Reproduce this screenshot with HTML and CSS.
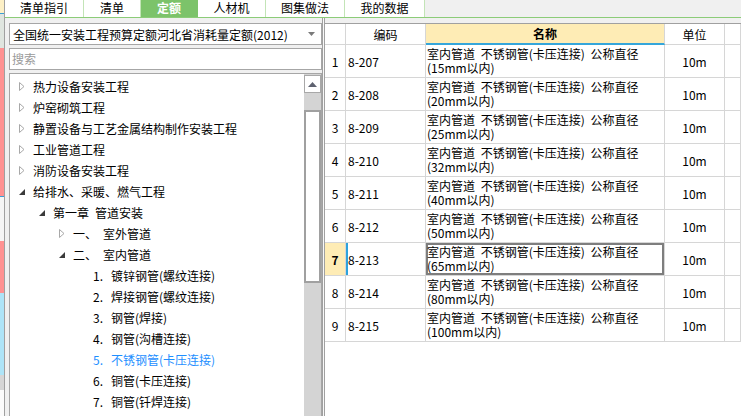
FILE: index.html
```html
<!DOCTYPE html>
<html lang="zh">
<head>
<meta charset="utf-8">
<title>定额</title>
<link rel="stylesheet" href="styles.css">
</head>
<body>
<div class="app">
  <div class="strip">
    <div class="seg s1"></div>
    <div class="seg s2"></div>
    <div class="seg s3"></div>
    <div class="seg s4"></div>
    <div class="seg s5"></div>
    <div class="seg s6"></div>
    <div class="seg s7"></div>
    <div class="seg s8"></div>
  </div>
  <div class="main">
    <div class="tabs">
      <div class="tab t1">清单指引</div>
      <div class="tab t2">清单</div>
      <div class="tab t3 active">定额</div>
      <div class="tab t4">人材机</div>
      <div class="tab t5">图集做法</div>
      <div class="tab t6">我的数据</div>
    </div>
    <div class="content">
      <div class="left">
        <div class="dropdown">
          <span>全国统一安装工程预算定额河北省消耗量定额(2012)</span>
          <svg class="caret" width="7" height="4" viewBox="0 0 7 4"><polygon points="0,0 7,0 3.5,4" fill="#7a7a7a"/></svg>
        </div>
        <div class="search">搜索</div>
        <div class="tree">
          <div class="tree-list">
            <div class="node l0"><span class="tog"><svg width="6" height="9" viewBox="0 0 6 9"><polygon points="0.5,0.5 5,4.5 0.5,8.5" fill="#fff" stroke="#a8a8a8"/></svg></span><span>热力设备安装工程</span></div>
            <div class="node l0"><span class="tog"><svg width="6" height="9" viewBox="0 0 6 9"><polygon points="0.5,0.5 5,4.5 0.5,8.5" fill="#fff" stroke="#a8a8a8"/></svg></span><span>炉窑砌筑工程</span></div>
            <div class="node l0"><span class="tog"><svg width="6" height="9" viewBox="0 0 6 9"><polygon points="0.5,0.5 5,4.5 0.5,8.5" fill="#fff" stroke="#a8a8a8"/></svg></span><span>静置设备与工艺金属结构制作安装工程</span></div>
            <div class="node l0"><span class="tog"><svg width="6" height="9" viewBox="0 0 6 9"><polygon points="0.5,0.5 5,4.5 0.5,8.5" fill="#fff" stroke="#a8a8a8"/></svg></span><span>工业管道工程</span></div>
            <div class="node l0"><span class="tog"><svg width="6" height="9" viewBox="0 0 6 9"><polygon points="0.5,0.5 5,4.5 0.5,8.5" fill="#fff" stroke="#a8a8a8"/></svg></span><span>消防设备安装工程</span></div>
            <div class="node l0"><span class="tog"><svg width="6" height="6" viewBox="0 0 6 6"><polygon points="6,0 6,6 0,6" fill="#3a3a3a"/></svg></span><span>给排水、采暖、燃气工程</span></div>
            <div class="node l1"><span class="tog"><svg width="6" height="6" viewBox="0 0 6 6"><polygon points="6,0 6,6 0,6" fill="#3a3a3a"/></svg></span><span class="chap">第一章</span><span>管道安装</span></div>
            <div class="node l2"><span class="tog"><svg width="6" height="9" viewBox="0 0 6 9"><polygon points="0.5,0.5 5,4.5 0.5,8.5" fill="#fff" stroke="#a8a8a8"/></svg></span><span class="sec">一、</span><span>室外管道</span></div>
            <div class="node l2"><span class="tog"><svg width="6" height="6" viewBox="0 0 6 6"><polygon points="6,0 6,6 0,6" fill="#3a3a3a"/></svg></span><span class="sec">二、</span><span>室内管道</span></div>
            <div class="node l3"><span class="tog"></span><span class="num">1.</span><span>镀锌钢管(螺纹连接)</span></div>
            <div class="node l3"><span class="tog"></span><span class="num">2.</span><span>焊接钢管(螺纹连接)</span></div>
            <div class="node l3"><span class="tog"></span><span class="num">3.</span><span>钢管(焊接)</span></div>
            <div class="node l3"><span class="tog"></span><span class="num">4.</span><span>钢管(沟槽连接)</span></div>
            <div class="node l3 sel"><span class="tog"></span><span class="num">5.</span><span>不锈钢管(卡压连接)</span></div>
            <div class="node l3"><span class="tog"></span><span class="num">6.</span><span>铜管(卡压连接)</span></div>
            <div class="node l3"><span class="tog"></span><span class="num">7.</span><span>铜管(钎焊连接)</span></div>
            <div class="node l3"><span class="tog"></span><span class="num">8.</span><span>承插铸铁排水管(石棉水泥接口)</span></div>
          </div>
          <div class="scrollbar">
            <div class="sb-btn"><svg width="9" height="5" viewBox="0 0 9 5"><polygon points="0,5 9,5 4.5,0" fill="#5e6270"/></svg></div>
            <div class="sb-gap"></div>
            <div class="sb-thumb"></div>
          </div>
        </div>
      </div>
      <div class="divider"></div>
      <div class="right">
        <div class="grid">
          <div class="hc"></div>
          <div class="hc">编码</div>
          <div class="hc hname">名称</div>
          <div class="hc">单位</div>
          <div class="hc"></div>

          <div class="c rn">1</div><div class="c code">8-207</div><div class="c name"><span class="ln">室内管道 不锈钢管(卡压连接) 公称直径</span><span class="ln">(15mm以内)</span></div><div class="c unit">10m</div><div class="c"></div>
          <div class="c rn">2</div><div class="c code">8-208</div><div class="c name"><span class="ln">室内管道 不锈钢管(卡压连接) 公称直径</span><span class="ln">(20mm以内)</span></div><div class="c unit">10m</div><div class="c"></div>
          <div class="c rn">3</div><div class="c code">8-209</div><div class="c name"><span class="ln">室内管道 不锈钢管(卡压连接) 公称直径</span><span class="ln">(25mm以内)</span></div><div class="c unit">10m</div><div class="c"></div>
          <div class="c rn">4</div><div class="c code">8-210</div><div class="c name"><span class="ln">室内管道 不锈钢管(卡压连接) 公称直径</span><span class="ln">(32mm以内)</span></div><div class="c unit">10m</div><div class="c"></div>
          <div class="c rn">5</div><div class="c code">8-211</div><div class="c name"><span class="ln">室内管道 不锈钢管(卡压连接) 公称直径</span><span class="ln">(40mm以内)</span></div><div class="c unit">10m</div><div class="c"></div>
          <div class="c rn">6</div><div class="c code">8-212</div><div class="c name"><span class="ln">室内管道 不锈钢管(卡压连接) 公称直径</span><span class="ln">(50mm以内)</span></div><div class="c unit">10m</div><div class="c"></div>
          <div class="c rn cur">7</div><div class="c code curcode">8-213</div><div class="c name focus"><span class="ln">室内管道 不锈钢管(卡压连接) 公称直径</span><span class="ln">(65mm以内)</span></div><div class="c unit">10m</div><div class="c"></div>
          <div class="c rn">8</div><div class="c code">8-214</div><div class="c name"><span class="ln">室内管道 不锈钢管(卡压连接) 公称直径</span><span class="ln">(80mm以内)</span></div><div class="c unit">10m</div><div class="c"></div>
          <div class="c rn">9</div><div class="c code">8-215</div><div class="c name"><span class="ln">室内管道 不锈钢管(卡压连接) 公称直径</span><span class="ln">(100mm以内)</span></div><div class="c unit">10m</div><div class="c"></div>
        </div>
      </div>
    </div>
  </div>
</div>
</body>
</html>
```
FILE: styles.css
```css
* { box-sizing: border-box; }
html, body { margin: 0; padding: 0; }
body {
  width: 741px;
  height: 416px;
  overflow: hidden;
  background: #f0f0f0;
  font-family: "Noto Sans CJK SC", "Noto Sans", sans-serif;
  font-size: 12px;
  color: #000;
}
.app { display: flex; height: 416px; }

/* left decorative strip (window behind) */
.strip {
  width: 5px;
  display: flex;
  flex-direction: column;
  border-right: 1px solid #a0a0a0;
}
.s1 { height: 13px; background: #fdf0c6; }
.s2 { height: 35px; background: #dfe5df; border-top: 1px solid #3b9fd6; }
.s3 { height: 148px; background: #ff9292; }
.s4 { height: 45px; background: #f5f5f5; border-top: 1px solid #3b9fd6; }
.s5 { height: 52px; background: #ff9292; }
.s6 { height: 82px; background: #aee4f7; }
.s7 { height: 15px; background: #d6d6d6; }
.s8 { flex: 1; background: #fbfbfb; }

.main { flex: 1; display: flex; flex-direction: column; min-width: 0; }

/* tabs */
.tabs {
  height: 18px;
  display: flex;
  border-bottom: 1px solid #8ccc78;
  background: #f0f0f0;
}
.tab {
  background: #fff;
  border-right: 1px solid #c3e4b7;
  text-align: center;
  line-height: 15px;
  font-size: 12px;
}
.t1 { width: 79px; }
.t2 { width: 57px; }
.t3 { width: 57px; }
.t4 { width: 68px; }
.t5 { width: 79px; }
.t6 { width: 80px; }
.tab.active { background: #7cc36a; color: #fff; font-weight: bold; border-right-color: #7cc36a; }

.content { flex: 1; display: flex; min-height: 0; }

/* left panel */
.left {
  width: 317px;
  padding: 5px 0 0 4px;
  display: flex;
  flex-direction: column;
  gap: 3px;
}
.dropdown {
  height: 22px;
  background: #fff;
  border: 1px solid #a6a6a6;
  display: flex;
  align-items: center;
  justify-content: space-between;
  padding: 0 6px 0 3px;
  white-space: nowrap;
}
.caret { display: block; }
.search {
  height: 22px;
  background: #fff;
  border: 1px solid #a6a6a6;
  color: #9a9a9a;
  padding-left: 2px;
  line-height: 20px;
}
.tree {
  flex: 1;
  background: #fff;
  border: 1px solid #a6a6a6;
  border-bottom: none;
  display: flex;
  min-height: 0;
}
.tree-list {
  flex: 1;
  padding-top: 2px;
  overflow: hidden;
}
.node {
  height: 21px;
  display: flex;
  align-items: center;
  white-space: nowrap;
}
.l0 { padding-left: 9px; }
.l1 { padding-left: 29px; }
.l2 { padding-left: 49px; }
.l3 { padding-left: 69px; }
.tog { width: 14px; height: 21px; display: flex; align-items: center; flex: none; }
.tog svg { display: block; }
.chap { margin-right: 6px; }
.sec { display: inline-block; width: 30px; }
.num { display: inline-block; width: 18px; }
.node.sel { color: #1e8fff; }

.scrollbar {
  width: 17px;
  background: #d4d4d4;
  display: flex;
  flex-direction: column;
  padding-top: 1px;
}
.sb-btn {
  height: 18px;
  background: #fff;
  border: 1px solid #a8a8a8;
  display: flex;
  align-items: center;
  justify-content: center;
}
.sb-gap { height: 17px; }
.sb-thumb {
  height: 173px;
  background: #fff;
  border: 2px solid #a0a0a0;
}

.divider {
  width: 3px;
  border-left: 1px solid #a0a0a0;
  border-right: 1px solid #a0a0a0;
  background: #f8f8f8;
}

/* right table */
.right {
  flex: 1;
  padding-top: 5px;
  display: flex;
  flex-direction: column;
}
.grid {
  flex: 1;
  background: #fff;
  border-top: 1px solid #a0a0a0;
  display: grid;
  grid-template-columns: 21px 80px 239px 60px 1fr;
  grid-template-rows: 21px repeat(9, 33px);
  align-content: start;
}
.hc {
  border-right: 1px solid #d6d6d6;
  border-bottom: 1px solid #d6d6d6;
  display: flex;
  align-items: center;
  justify-content: center;
}
.hname {
  background: #feecb5;
  font-weight: bold;
  border-bottom: 2px solid #35a6da;
}
.c {
  border-right: 1px solid #d6d6d6;
  border-bottom: 1px solid #d6d6d6;
  display: flex;
  align-items: center;
  white-space: nowrap;
}
.rn { justify-content: center; }
.rn.cur { background: #feecb5; font-weight: bold; }
.curcode { box-shadow: inset 2px 0 0 #2ea3dc; }
.code { padding-left: 2px; }
.name {
  padding-left: 1px;
  flex-direction: column;
  align-items: flex-start;
  justify-content: center;
  word-spacing: 3px;
}
.ln { display: block; height: 14px; line-height: 14px; }
.name.focus { box-shadow: inset 0 0 0 2px #7e7e7e; }
.unit { justify-content: center; }
```
